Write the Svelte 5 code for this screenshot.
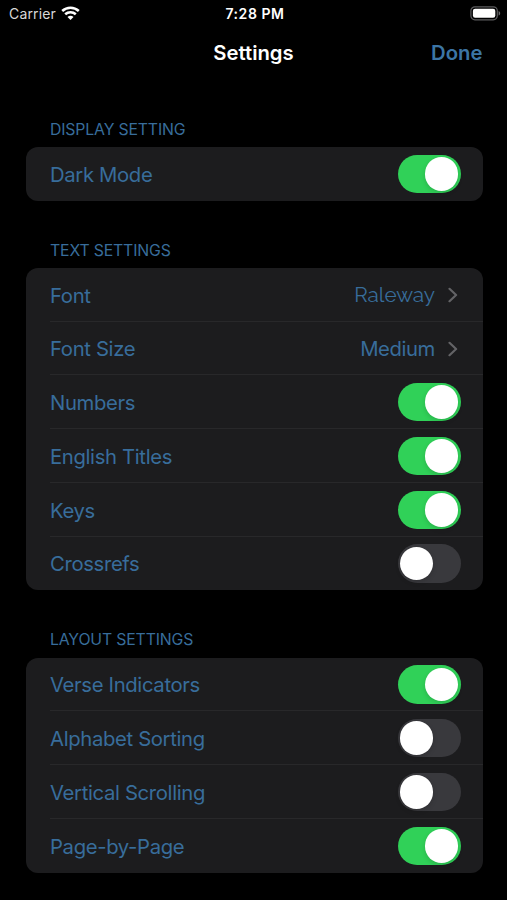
<script>
  let sections = $state([
    {
      title: 'Display Setting',
      rows: [{ label: 'Dark Mode', on: true }]
    },
    {
      title: 'Text Settings',
      rows: [
        { label: 'Font', value: 'Raleway', face: 'raleway' },
        { label: 'Font Size', value: 'Medium' },
        { label: 'Numbers', on: true },
        { label: 'English Titles', on: true },
        { label: 'Keys', on: true },
        { label: 'Crossrefs', on: false }
      ]
    },
    {
      title: 'Layout Settings',
      rows: [
        { label: 'Verse Indicators', on: true },
        { label: 'Alphabet Sorting', on: false },
        { label: 'Vertical Scrolling', on: false },
        { label: 'Page-by-Page', on: true }
      ]
    }
  ]);
</script>

<div class="screen">
  <div class="status">
    <div class="carrier">
      <span>Carrier</span>
      <svg width="19" height="15" viewBox="0 0 19 15" fill="none" stroke="#fff" stroke-width="2.6">
        <path d="M1.2 5C5.9 0.7 13.1 0.7 17.8 5" />
        <path d="M4.2 8.3C7.2 5.6 11.8 5.6 14.8 8.3" />
        <path d="M9.5 13.9L6.5 10.9C8.2 9.3 10.8 9.3 12.5 10.9Z" fill="#fff" stroke="none" />
      </svg>
    </div>
    <span class="time">7:28 PM</span>
    <svg class="battery" width="31" height="15" viewBox="0 0 31 15">
      <rect x="0.9" y="0.8" width="26.4" height="13" rx="4" fill="none" stroke="#5c5c5e" stroke-width="1.2" />
      <rect x="2.9" y="2.8" width="22.4" height="9" rx="2.2" fill="#fff" />
      <path d="M28.6 5C30.7 5.8 30.7 8.8 28.6 9.6Z" fill="#6c6c6e" />
    </svg>
  </div>

  <header>
    <h1>Settings</h1>
    <button class="done">Done</button>
  </header>

  <main>
    {#each sections as section}
      <section>
        <h2>{section.title}</h2>
        <div class="card">
          {#each section.rows as row}
            <div class="row">
              <span class="label">{row.label}</span>
              {#if row.value}
                <span class="value {row.face}">{row.value}</span>
                <svg class="chevron" width="10" height="16" viewBox="0 0 10 16" fill="none" stroke="#636366" stroke-width="2.2" stroke-linecap="round" stroke-linejoin="round">
                  <path d="M1.5 1.8L8.1 8L1.5 14.2" />
                </svg>
              {:else}
                <button
                  class="toggle"
                  class:on={row.on}
                  role="switch"
                  aria-checked={row.on}
                  aria-label={row.label}
                  onclick={() => (row.on = !row.on)}
                >
                  <span class="knob"></span>
                </button>
              {/if}
            </div>
          {/each}
        </div>
      </section>
    {/each}
  </main>
</div>

<style>
  :global(body) {
    background: #000;
  }

  .screen {
    box-sizing: border-box;
    width: 507px;
    height: 900px;
    overflow: hidden;
    background: #000;
    color: #386d9b;
    font-family: Inter, 'Liberation Sans', sans-serif;
  }

  button {
    border: none;
    padding: 0;
    background: none;
    font: inherit;
    color: inherit;
  }

  .status {
    display: grid;
    grid-template-columns: 1fr auto 1fr;
    align-items: center;
    height: 27px;
    padding: 0 6px 0 9px;
    color: #fff;
    font-size: 14px;
  }

  .carrier {
    display: flex;
    align-items: center;
    gap: 5px;
    color: #d8d8d8;
    letter-spacing: 0.15px;
  }

  .time {
    font-weight: 600;
    letter-spacing: 0.55px;
  }

  .battery {
    justify-self: end;
  }

  header {
    display: grid;
    grid-template-columns: 1fr auto 1fr;
    align-items: center;
    height: 50px;
    margin-bottom: 2px;
    padding: 0 24.5px;
  }

  h1 {
    grid-column: 2;
    margin: 0;
    color: #fff;
    font-size: 20.3px;
    font-weight: 600;
    letter-spacing: 0;
  }

  .done {
    justify-self: end;
    font-size: 20.3px;
    font-weight: 600;
    color: #3c75a5;
  }

  main {
    padding: 41.5px 24.5px 0 25.5px;
  }

  section {
    margin-bottom: 41px;
  }

  h2 {
    margin: 0 0 8.4px 24.5px;
    font-size: 15.8px;
    font-weight: 400;
    line-height: 18px;
    letter-spacing: -0.15px;
    text-transform: uppercase;
  }

  .card {
    border-radius: 12px;
    background: #1c1c1e;
  }

  .row {
    display: flex;
    align-items: center;
    height: 53.72px;
    margin-left: 24.5px;
    padding-right: 22px;
    box-sizing: border-box;
    font-size: 20.3px;
  }

  .row + .row {
    box-shadow: 0 -1px #28282a;
  }

  .label {
    flex: 1;
    padding-top: 0.7px;
    letter-spacing: -0.35px;
  }

  .value {
    margin-right: 12.5px;
    padding-top: 0.7px;
    letter-spacing: -0.4px;
  }

  .raleway {
    font-family: Raleway, Lato, sans-serif;
    font-size: 20.7px;
    letter-spacing: 0;
  }

  .chevron {
    margin-right: 3px;
  }

  .toggle {
    width: 63px;
    height: 38.4px;
    padding: 2.4px;
    border-radius: 20px;
    background: #39393d;
  }

  .knob {
    display: block;
    width: 33.6px;
    height: 33.6px;
    border-radius: 50%;
    background: #fff;
    box-shadow: 0 2px 5px rgba(0, 0, 0, 0.15);
  }

  .toggle.on {
    background: #30d158;
  }

  .toggle.on .knob {
    margin-left: auto;
  }
</style>
